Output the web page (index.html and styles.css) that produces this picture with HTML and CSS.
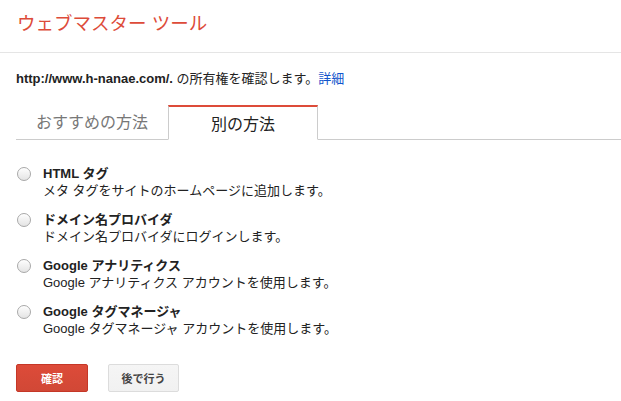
FILE: index.html
```html
<!DOCTYPE html>
<html lang="ja">
<head>
<meta charset="utf-8">
<title>ウェブマスター ツール</title>
<link rel="stylesheet" href="styles.css">
</head>
<body>
<header class="header">
  <h1 class="title">ウェブマスター ツール</h1>
</header>
<main class="main">
  <p class="info"><b class="url">http://www.h-nanae.com/.</b> の所有権を確認します。<a class="link" href="#">詳細</a></p>
  <div class="tabs">
    <div class="tab">おすすめの方法</div>
    <div class="tab tab-active">別の方法</div>
    <div class="tab-rest"></div>
  </div>
  <ul class="options">
    <li class="option">
      <span class="radio"></span>
      <div class="option-text">
        <div class="option-title">HTML タグ</div>
        <div class="option-desc">メタ タグをサイトのホームページに追加します。</div>
      </div>
    </li>
    <li class="option">
      <span class="radio"></span>
      <div class="option-text">
        <div class="option-title">ドメイン名プロバイダ</div>
        <div class="option-desc">ドメイン名プロバイダにログインします。</div>
      </div>
    </li>
    <li class="option">
      <span class="radio"></span>
      <div class="option-text">
        <div class="option-title">Google アナリティクス</div>
        <div class="option-desc">Google アナリティクス アカウントを使用します。</div>
      </div>
    </li>
    <li class="option">
      <span class="radio"></span>
      <div class="option-text">
        <div class="option-title">Google タグマネージャ</div>
        <div class="option-desc">Google タグマネージャ アカウントを使用します。</div>
      </div>
    </li>
  </ul>
  <div class="actions">
    <button class="btn btn-primary">確認</button>
    <button class="btn btn-secondary">後で行う</button>
  </div>
</main>
</body>
</html>
```

FILE: styles.css
```css
* { box-sizing: border-box; }
html, body {
  margin: 0;
  padding: 0;
  background: #fff;
}
body {
  font-family: "Liberation Sans", Arial, "Noto Sans CJK JP", sans-serif;
  font-size: 13px;
  color: #222;
  overflow: hidden;
}
.header {
  height: 53px;
  border-bottom: 1px solid #e5e5e5;
}
.title {
  margin: 0;
  padding-left: 17px;
  font-size: 18.5px;
  font-weight: normal;
  line-height: 48px;
  color: #dd4b39;
}
.main {
  padding-left: 16px;
}
.info {
  margin: 17px 0 0;
  line-height: 18px;
  color: #222;
}
.url { font-weight: bold; }
.link {
  color: #1155cc;
  text-decoration: none;
}
.tabs {
  display: flex;
  margin-top: 17px;
  height: 35px;
}
.tab {
  width: 152px;
  height: 35px;
  display: flex;
  align-items: center;
  justify-content: center;
  font-size: 16px;
  color: #777;
  border-bottom: 1px solid #ccc;
  padding-bottom: 3px;
}
.tab-active {
  width: 150px;
  color: #222;
  border: 1px solid #ccc;
  border-top: 2px solid #dd4b39;
  border-bottom: 1px solid #fff;
  padding-bottom: 1px;
}
.tab-rest {
  flex: 1;
  border-bottom: 1px solid #ccc;
}
.options {
  list-style: none;
  margin: 25px 0 0;
  padding: 0;
}
.option {
  display: flex;
  align-items: flex-start;
  margin-bottom: 12px;
}
.option:last-child { margin-bottom: 0; }
.radio {
  width: 14px;
  height: 14px;
  margin: 2px 12px 0 1px;
  border-radius: 50%;
  border: 1px solid #a8a8a8;
  background: linear-gradient(#fdfdfd, #e4e4e4);
  box-shadow: inset 0 1px 0 #fff;
  flex: none;
}
.option-text {
  line-height: 17px;
}
.option-title {
  font-weight: bold;
}
.actions {
  display: flex;
  gap: 20px;
  margin-top: 27px;
}
.btn {
  height: 28px;
  border-radius: 2px;
  font-family: inherit;
  font-size: 11px;
  font-weight: bold;
  padding: 0;
  cursor: pointer;
}
.btn-primary {
  width: 72px;
  background: #d14836;
  background: linear-gradient(#dd4b39, #d14836);
  border: 1px solid #c53727;
  color: #fff;
}
.btn-secondary {
  width: 71px;
  background: linear-gradient(#f5f5f5, #f1f1f1);
  border: 1px solid #dcdcdc;
  color: #444;
}
```
